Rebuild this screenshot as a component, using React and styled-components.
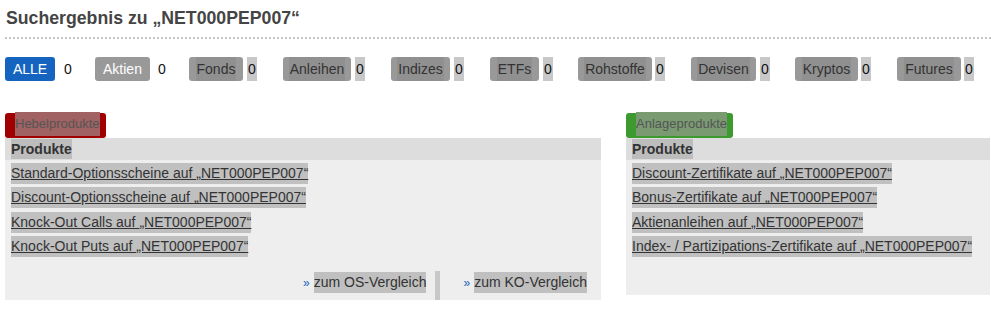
import styled, { createGlobalStyle } from "styled-components";

const Global = createGlobalStyle`
  body {
    margin: 0;
    background: #fff;
    font-family: "Liberation Sans", Arial, sans-serif;
  }
`;

const Page = styled.div`
  padding: 6px 0 0 5px;
  width: 986px;
`;

const Title = styled.h1`
  margin: 0 0 0 1px;
  font-size: 17.7px;
  line-height: 24px;
  font-weight: bold;
  color: #444;
`;

const Dotted = styled.div`
  margin-top: 7px;
  border-top: 2px dotted #c4c4c4;
`;

const Filters = styled.div`
  display: flex;
  align-items: center;
  margin-top: 18px;
  height: 24px;
`;

const Filter = styled.div`
  display: flex;
  align-items: center;
  flex: none;
  width: ${({ $w }) => $w}px;
`;

const FilterBtn = styled.div`
  height: 24px;
  border-radius: 3px;
  display: flex;
  align-items: center;
  justify-content: center;
  box-sizing: border-box;
  width: ${({ $w }) => $w}px;
  background: ${({ $active }) => ($active ? "#1565c0" : "#999")};
  color: ${({ $light }) => ($light ? "#fff" : "#333")};
  font-size: 14px;
`;

const BtnText = styled.span`
  background: ${({ $plain }) => ($plain ? "transparent" : "#909090")};
  line-height: 24px;
  padding: 0 1px;
`;

const Count = styled.span`
  margin-left: ${({ $ml }) => $ml}px;
  font-size: 14px;
  line-height: 24px;
  color: #111;
  padding: 0 1px;
  background: ${({ $plain }) => ($plain ? "transparent" : "#c8c8c8")};
`;

const Columns = styled.div`
  display: flex;
  align-items: flex-start;
  margin-top: 32px;
  gap: 25px;
`;

const Column = styled.div`
  width: ${({ $w }) => $w}px;
`;

const Badge = styled.div`
  display: inline-flex;
  height: 25px;
  border-radius: 3px;
  background: ${({ $c }) => $c};
  padding: 0 6px 0 10px;
  align-items: flex-start;
`;

const BadgeText = styled.span`
  margin-top: -1px;
  background: ${({ $c }) => $c};
  color: #555;
  font-size: 13px;
  line-height: 24px;
`;

const Panel = styled.div`
  background: #eee;
  height: ${({ $h }) => $h}px;
  display: flex;
  flex-direction: column;
`;

const PanelHead = styled.div`
  background: #ddd;
  height: 22px;
  padding-left: 6px;
  display: flex;
  align-items: center;
`;

const HeadText = styled.span`
  background: #bdbdbd;
  font-weight: bold;
  font-size: 14px;
  line-height: 20px;
  color: #333;
`;

const List = styled.div`
  display: flex;
  flex-direction: column;
  align-items: flex-start;
  padding: 3px 0 0 6px;
  gap: 3.3px;
`;

const Link = styled.a`
  background: #c0c0c0;
  color: #333;
  text-decoration: underline;
  font-size: 14px;
  line-height: 21px;
`;

const Footer = styled.div`
  margin-top: auto;
  display: flex;
  justify-content: flex-end;
  align-items: flex-end;
  height: 29px;
  padding-right: 14px;
`;

const Compare = styled.div`
  display: flex;
  align-items: center;
  height: 21px;
  margin-bottom: 7px;
  font-size: 14px;
  color: #333;
`;

const Arrow = styled.span`
  color: #1565c0;
  font-size: 12px;
  margin-right: 4px;
`;

const CompareText = styled.span`
  background: #c0c0c0;
  line-height: 21px;
`;

const Sep = styled.div`
  width: 5px;
  height: 29px;
  background: #c8c8c8;
  margin: 0 23px 0 9px;
`;

const filters = [
  { label: "ALLE", slot: 90, w: 50, active: true, light: true, plainText: true, plainCount: true, ml: 8 },
  { label: "Aktien", slot: 94, w: 55, light: true, plainText: true, plainCount: true, ml: 7 },
  { label: "Fonds", slot: 94, w: 54, ml: 4 },
  { label: "Anleihen", slot: 108, w: 68, ml: 4 },
  { label: "Indizes", slot: 99, w: 59, ml: 4 },
  { label: "ETFs", slot: 88, w: 49, ml: 4 },
  { label: "Rohstoffe", slot: 113, w: 74, ml: 3 },
  { label: "Devisen", slot: 104, w: 65, ml: 4 },
  { label: "Kryptos", slot: 102, w: 63, ml: 3 },
  { label: "Futures", slot: 90, w: 64, ml: 3 },
];

const q = "„NET000PEP007“";

const hebel = [
  "Standard-Optionsscheine auf ",
  "Discount-Optionsscheine auf ",
  "Knock-Out Calls auf ",
  "Knock-Out Puts auf ",
];

const anlage = [
  "Discount-Zertifikate auf ",
  "Bonus-Zertifikate auf ",
  "Aktienanleihen auf ",
  "Index- / Partizipations-Zertifikate auf ",
];

export default function App() {
  return (
    <>
      <Global />
      <Page>
        <Title>Suchergebnis zu {q}</Title>
        <Dotted />
        <Filters>
          {filters.map((f) => (
            <Filter key={f.label} $w={f.slot}>
              <FilterBtn $w={f.w} $active={f.active} $light={f.light}>
                <BtnText $plain={f.plainText}>{f.label}</BtnText>
              </FilterBtn>
              <Count $ml={f.ml} $plain={f.plainCount}>0</Count>
            </Filter>
          ))}
        </Filters>
        <Columns>
          <Column $w={596}>
            <Badge $c="#a00000">
              <BadgeText $c="#a06262">Hebelprodukte</BadgeText>
            </Badge>
            <Panel $h={162}>
              <PanelHead>
                <HeadText>Produkte</HeadText>
              </PanelHead>
              <List>
                {hebel.map((t) => (
                  <Link key={t} href="#">{t}{q}</Link>
                ))}
              </List>
              <Footer>
                <Compare>
                  <Arrow>»</Arrow>
                  <CompareText>zum OS-Vergleich</CompareText>
                </Compare>
                <Sep />
                <Compare>
                  <Arrow>»</Arrow>
                  <CompareText>zum KO-Vergleich</CompareText>
                </Compare>
              </Footer>
            </Panel>
          </Column>
          <Column $w={364}>
            <Badge $c="#3c9a2f">
              <BadgeText $c="#7a9a72">Anlageprodukte</BadgeText>
            </Badge>
            <Panel $h={157}>
              <PanelHead>
                <HeadText>Produkte</HeadText>
              </PanelHead>
              <List>
                {anlage.map((t) => (
                  <Link key={t} href="#">{t}{q}</Link>
                ))}
              </List>
            </Panel>
          </Column>
        </Columns>
      </Page>
    </>
  );
}
